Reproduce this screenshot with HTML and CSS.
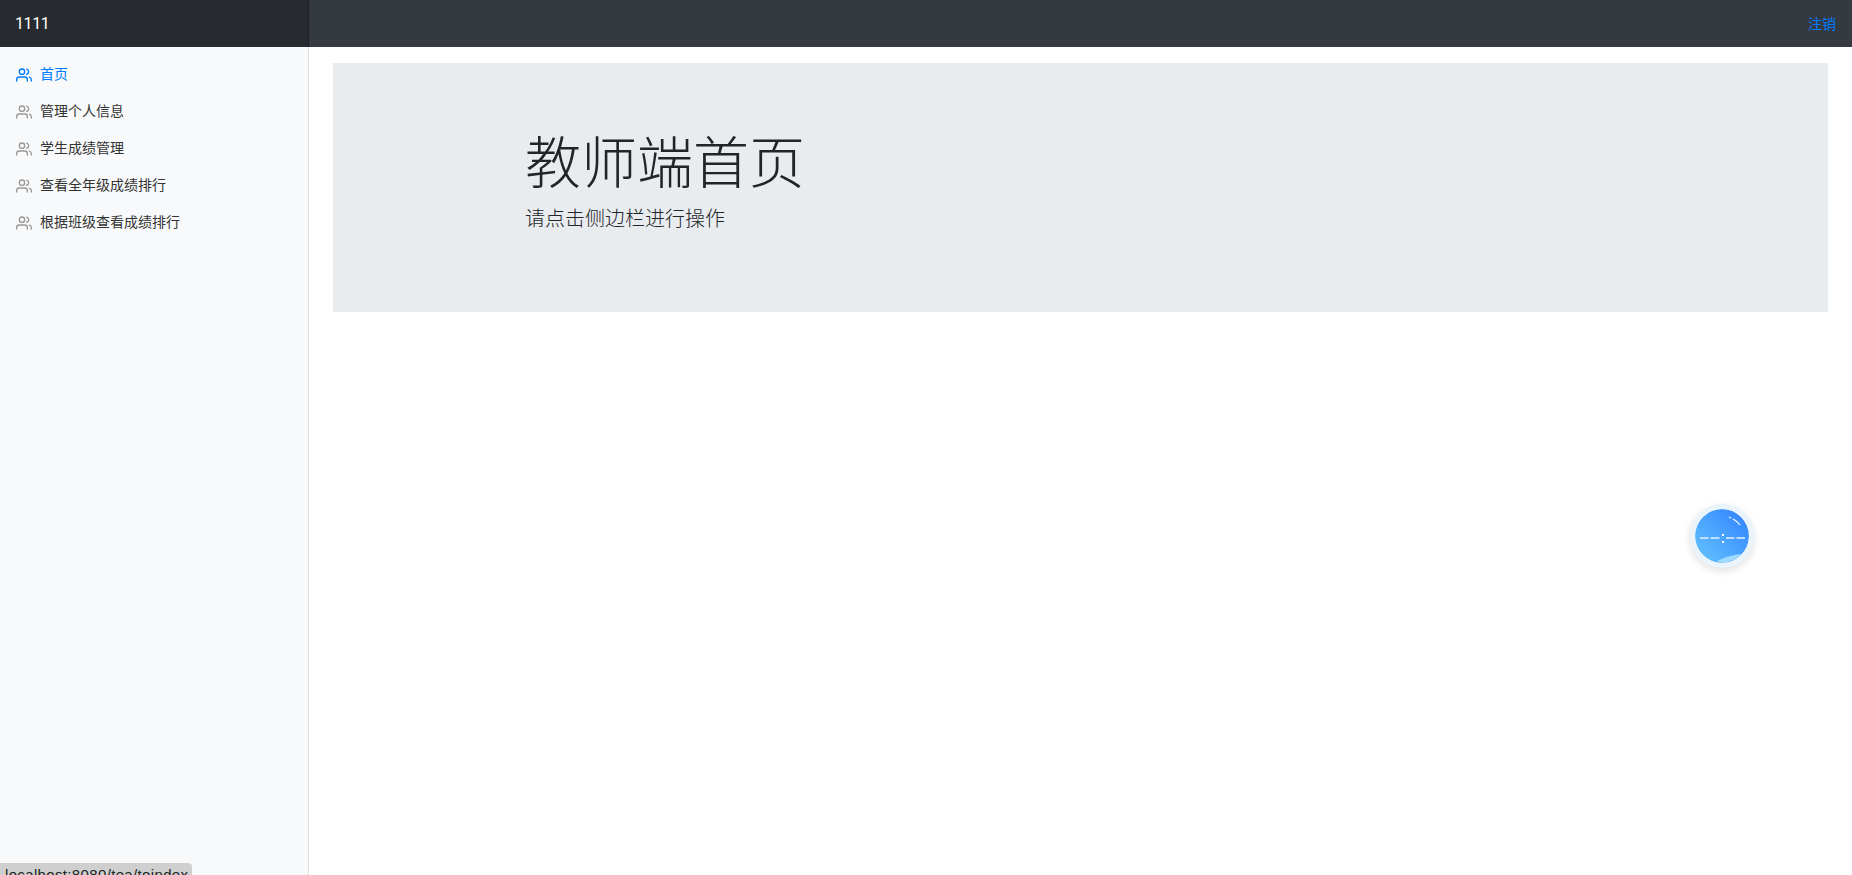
FILE: index.html
```html
<!DOCTYPE html>
<html lang="zh-CN">
<head>
    <meta charset="UTF-8">
    <meta name="viewport" content="width=device-width, initial-scale=1.0">
    <title>教师端首页</title>
    <link rel="stylesheet" href="styles.css">
</head>
<body>
    <nav class="topbar">
        <a class="brand">1111</a>
        <a class="logout">注销</a>
    </nav>

    <div class="page">
        <aside class="sidebar">
            <ul class="side-nav">
                <li class="side-item active">
                    <svg class="users-icon" viewBox="0 0 24 24"><path d="M17 21v-2a4 4 0 0 0-4-4H5a4 4 0 0 0-4 4v2"/><circle cx="9" cy="7" r="4"/><path d="M23 21v-2a4 4 0 0 0-3-3.87"/><path d="M16 3.13a4 4 0 0 1 0 7.75"/></svg>
                    首页
                </li>
                <li class="side-item">
                    <svg class="users-icon" viewBox="0 0 24 24"><path d="M17 21v-2a4 4 0 0 0-4-4H5a4 4 0 0 0-4 4v2"/><circle cx="9" cy="7" r="4"/><path d="M23 21v-2a4 4 0 0 0-3-3.87"/><path d="M16 3.13a4 4 0 0 1 0 7.75"/></svg>
                    管理个人信息
                </li>
                <li class="side-item">
                    <svg class="users-icon" viewBox="0 0 24 24"><path d="M17 21v-2a4 4 0 0 0-4-4H5a4 4 0 0 0-4 4v2"/><circle cx="9" cy="7" r="4"/><path d="M23 21v-2a4 4 0 0 0-3-3.87"/><path d="M16 3.13a4 4 0 0 1 0 7.75"/></svg>
                    学生成绩管理
                </li>
                <li class="side-item">
                    <svg class="users-icon" viewBox="0 0 24 24"><path d="M17 21v-2a4 4 0 0 0-4-4H5a4 4 0 0 0-4 4v2"/><circle cx="9" cy="7" r="4"/><path d="M23 21v-2a4 4 0 0 0-3-3.87"/><path d="M16 3.13a4 4 0 0 1 0 7.75"/></svg>
                    查看全年级成绩排行
                </li>
                <li class="side-item">
                    <svg class="users-icon" viewBox="0 0 24 24"><path d="M17 21v-2a4 4 0 0 0-4-4H5a4 4 0 0 0-4 4v2"/><circle cx="9" cy="7" r="4"/><path d="M23 21v-2a4 4 0 0 0-3-3.87"/><path d="M16 3.13a4 4 0 0 1 0 7.75"/></svg>
                    根据班级查看成绩排行
                </li>
            </ul>
        </aside>

        <main class="content">
            <section class="jumbotron">
                <h1 class="title">教师端首页</h1>
                <p class="lead">请点击侧边栏进行操作</p>
            </section>
        </main>
    </div>

    <!-- floating ball -->
    <div class="ball">
        <svg viewBox="0 0 54 54" width="54" height="54">
            <defs>
                <linearGradient id="ballFill" x1="1" y1="0" x2="0" y2="1">
                    <stop offset="0" stop-color="#2f80ff"/>
                    <stop offset="1" stop-color="#66c6ff"/>
                </linearGradient>
            </defs>
            <circle cx="27" cy="27" r="27" fill="url(#ballFill)"/>
            <path d="M22 52 Q34 46 47 45 Q38 53 27 54 Z" fill="#9fdcff"/>
            <path d="M34 8 L36 9 M38 10 Q42 12 45 16" fill="none" stroke="#fff" stroke-width="1.2"/>
            <path d="M5 29H13.500M15.500 29H24.500M31 29H39.500M41.500 29H50" fill="none" stroke="#e4f1ff" stroke-width="1.6"/>
            <rect x="27" y="25" width="2" height="2" fill="#fff"/>
            <rect x="27" y="32" width="2" height="2" fill="#fff"/>
        </svg>
    </div>

    <div class="status-bar">localhost:8080/tea/toindex</div>
</body>
</html>
```

FILE: styles.css
```css
* {
    box-sizing: border-box;
}
html, body {
    height: 100%;
}
body {
    margin: 0;
    overflow: hidden;
    font-family: "Noto Sans CJK SC", "Liberation Sans", sans-serif;
    font-size: 14px;
    line-height: 21px;
    color: #212529;
    background-color: #fff;
    display: flex;
    flex-direction: column;
}

.topbar {
    height: 47px;
    flex: none;
    display: flex;
    align-items: center;
    justify-content: space-between;
    background-color: #343a40;
}
.brand {
    width: 309px;
    height: 47px;
    padding-left: 15px;
    font-family: "Roboto", sans-serif;
    font-size: 16px;
    letter-spacing: -.4px;
    line-height: 47px;
    color: #fff;
    background-color: rgba(0, 0, 0, .25);
    box-shadow: inset -1px 0 0 rgba(0, 0, 0, .25);
}
.logout {
    padding-right: 16px;
    color: #007bff;
}

.page {
    flex: 1;
    display: flex;
    min-height: 0;
}
.sidebar {
    width: 309px;
    flex: none;
    padding-top: 8px;
    background-color: #f8f9fa;
    box-shadow: inset -1px 0 0 rgba(0, 0, 0, .1);
}
.side-nav {
    list-style: none;
    margin: 0;
    padding: 0;
}
.side-item {
    display: flex;
    align-items: center;
    height: 37px;
    padding: 0 16px;
    color: #333;
}
.side-item.active {
    color: #007bff;
}
.users-icon {
    width: 16px;
    height: 16px;
    margin-right: 8px;
    position: relative;
    top: 1px;
    fill: none;
    stroke: #999;
    stroke-width: 2;
    stroke-linecap: round;
    stroke-linejoin: round;
}
.side-item.active .users-icon {
    stroke: #007bff;
}

.content {
    flex: 1;
    padding: 16px 24px 0 24px;
}
.jumbotron {
    height: 249px;
    padding: 62px 0 0 192px;
    background-color: #e9ecef;
}
.title {
    margin: 0 0 11px;
    font-size: 56px;
    font-weight: 300;
    line-height: 67px;
}
.lead {
    margin: 0;
    font-size: 20px;
    font-weight: 300;
    line-height: 30px;
}

.ball {
    position: absolute;
    left: 1695px;
    top: 509px;
    width: 54px;
    height: 54px;
    border-radius: 50%;
    box-shadow: 0 0 0 5px #eaf4fb, 0 3px 9px 5px rgba(0, 0, 0, .12);
}
.ball svg {
    display: block;
    border-radius: 50%;
}

.status-bar {
    position: fixed;
    left: 0;
    bottom: -9px;
    width: 192px;
    height: 21px;
    padding: 2px 0 0 5px;
    font-family: "Liberation Sans", sans-serif;
    font-size: 15px;
    letter-spacing: .35px;
    line-height: 20px;
    color: #222;
    background-color: #cfcfcf;
    border-top-right-radius: 4px;
}
```
